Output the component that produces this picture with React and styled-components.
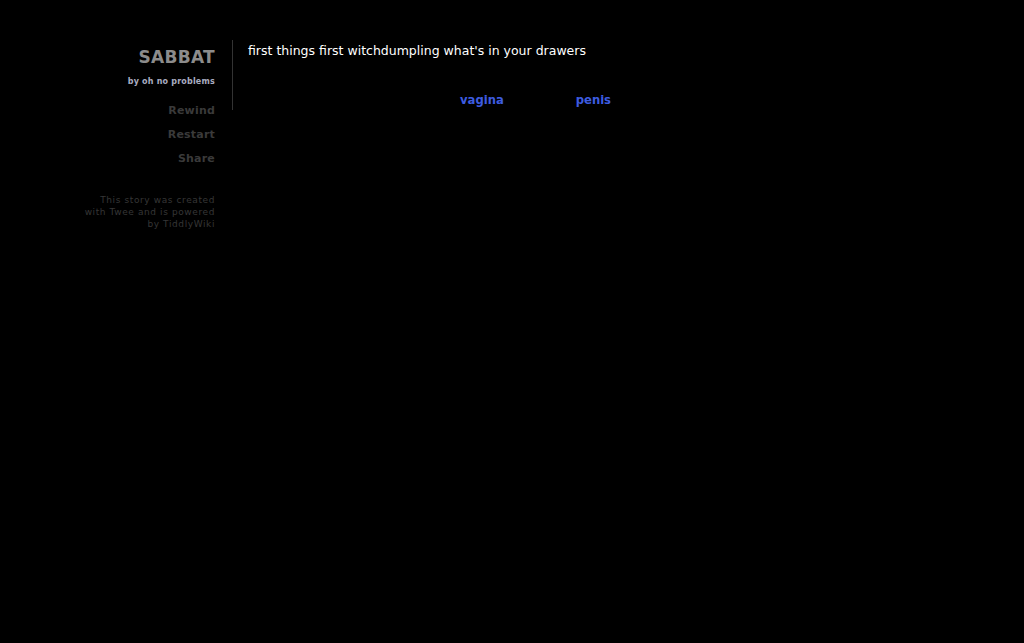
import React from "react";
import styled, { createGlobalStyle } from "styled-components";

const Global = createGlobalStyle`
  html, body {
    margin: 0;
    padding: 0;
    background: #000;
    height: 100%;
  }
  body {
    font-family: "DejaVu Sans", Verdana, sans-serif;
  }
`;

const Page = styled.div`
  display: flex;
  align-items: flex-start;
  padding-top: 40px;
  height: 603px;
  background: #000;
`;

const Sidebar = styled.div`
  width: 215px;
  padding-right: 17px;
  box-sizing: content-box;
  text-align: right;
  display: flex;
  flex-direction: column;
  align-items: flex-end;
`;

const Title = styled.div`
  font-size: 17px;
  font-weight: bold;
  color: #8c8c8c;
  letter-spacing: 0.3px;
  line-height: 20px;
  margin-top: 7px;
`;

const Author = styled.div`
  font-size: 8px;
  font-weight: bold;
  color: #a9adc0;
  letter-spacing: 0.2px;
  margin-top: 10px;
  line-height: 10px;
`;

const Menu = styled.div`
  display: flex;
  flex-direction: column;
  align-items: flex-end;
  margin-top: 16px;
  gap: 9px;
`;

const MenuItem = styled.a`
  font-size: 11px;
  font-weight: bold;
  color: #3a3a3a;
  letter-spacing: 0.2px;
  line-height: 15px;
  cursor: pointer;
`;

const Credits = styled.div`
  margin-top: 28px;
  font-size: 9px;
  line-height: 12px;
  letter-spacing: 0.6px;
  color: #363636;
  width: 134px;
`;

const Passage = styled.div`
  border-left: 1px solid #333;
  padding-left: 15px;
  height: 70px;
`;

const Body = styled.div`
  font-size: 12.5px;
  color: #fff;
  line-height: 16px;
  margin-top: 3px;
`;

const Choices = styled.div`
  display: flex;
  gap: 72px;
  padding-left: 212px;
  margin-top: 33px;
`;

const Choice = styled.a`
  font-size: 11.6px;
  font-weight: bold;
  color: #3d5ce0;
  line-height: 16px;
  cursor: pointer;
`;

export default function App() {
  return (
    <>
      <Global />
      <Page>
        <Sidebar>
          <Title>SABBAT</Title>
          <Author>by oh no problems</Author>
          <Menu>
            <MenuItem>Rewind</MenuItem>
            <MenuItem>Restart</MenuItem>
            <MenuItem>Share</MenuItem>
          </Menu>
          <Credits>
            This story was created with Twee and is powered by TiddlyWiki
          </Credits>
        </Sidebar>
        <Passage>
          <Body>first things first witchdumpling what's in your drawers</Body>
          <Choices>
            <Choice>vagina</Choice>
            <Choice>penis</Choice>
          </Choices>
        </Passage>
      </Page>
    </>
  );
}
